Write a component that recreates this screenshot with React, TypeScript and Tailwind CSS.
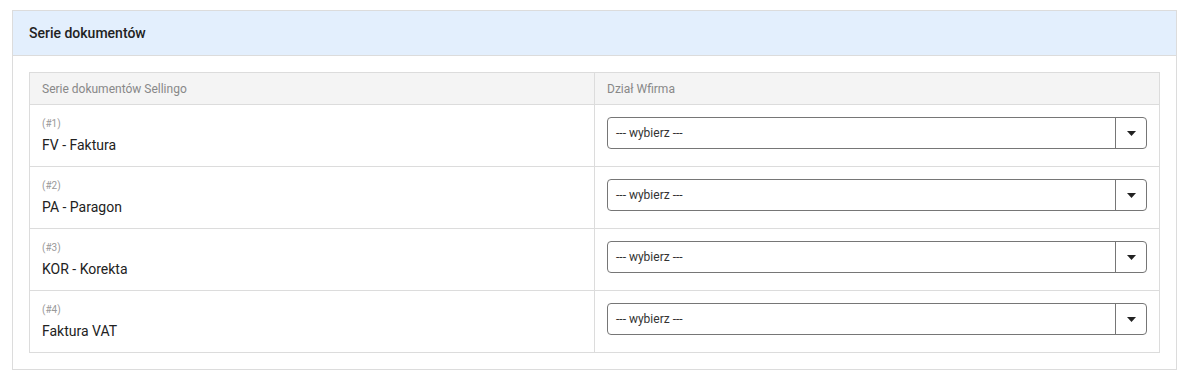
import React from "react";

const rows = [
  { id: "(#1)", name: "FV - Faktura" },
  { id: "(#2)", name: "PA - Paragon" },
  { id: "(#3)", name: "KOR - Korekta" },
  { id: "(#4)", name: "Faktura VAT" },
];

function Select() {
  return (
    <div className="flex h-[32px] w-full rounded-[4px] border border-[#767676] bg-white">
      <div className="flex flex-1 items-center pl-[8px] text-[12px] text-[#333]">--- wybierz ---</div>
      <div className="flex w-[31px] items-center justify-center border-l border-[#767676]">
        <svg width="9" height="5" viewBox="0 0 9 5">
          <path d="M0 0 L9 0 L4.5 5 Z" fill="#222" />
        </svg>
      </div>
    </div>
  );
}

export default function App() {
  return (
    <div className="bg-white px-3 pt-[10px] pb-[11px]" style={{ fontFamily: "Roboto, 'Liberation Sans', sans-serif" }}>
      <div className="border border-[#dcdcdc]">
        <div className="flex h-[45px] items-center border-b border-[#dcdcdc] bg-[#e3effd] px-4 text-[14px] font-medium text-[#222]">
          Serie dokumentów
        </div>
        <div className="p-4">
          <table className="w-full border-collapse border border-[#dcdcdc] text-left">
            <thead>
              <tr className="bg-[#f4f4f4]">
                <th className="h-[32px] w-1/2 border border-[#dcdcdc] px-3 py-0 text-[12px] font-normal text-[#888]">
                  Serie dokumentów Sellingo
                </th>
                <th className="h-[32px] w-1/2 border border-[#dcdcdc] px-3 py-0 text-[12px] font-normal text-[#888]">
                  Dział Wfirma
                </th>
              </tr>
            </thead>
            <tbody>
              {rows.map((r) => (
                <tr key={r.id}>
                  <td className="h-[62px] border border-[#dcdcdc] px-3 py-0 align-middle">
                    <div className="flex flex-col">
                      <span className="text-[10px] leading-[14px] text-[#999]">{r.id}</span>
                      <span className="mt-[4px] text-[14px] leading-[20px] text-[#222]">{r.name}</span>
                    </div>
                  </td>
                  <td className="h-[62px] border border-[#dcdcdc] px-3 pt-[12px] pb-0 align-top">
                    <Select />
                  </td>
                </tr>
              ))}
            </tbody>
          </table>
        </div>
      </div>
    </div>
  );
}
